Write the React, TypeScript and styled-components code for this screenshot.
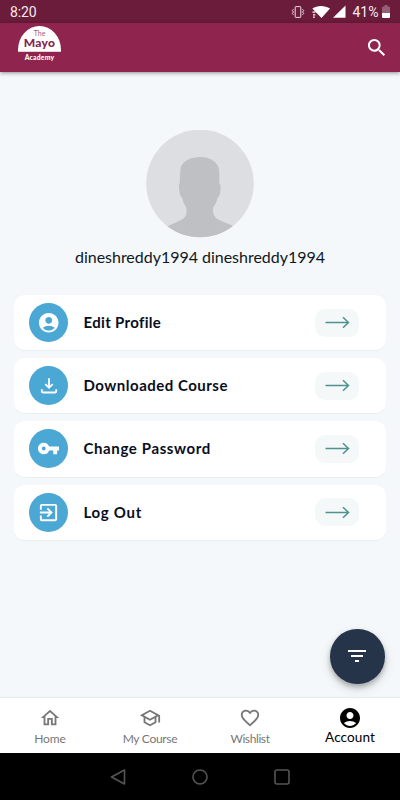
import React from "react";
import styled, { createGlobalStyle } from "styled-components";
import {
  MdAccountCircle,
  MdExitToApp,
  MdFavoriteBorder,
  MdFilterList,
  MdOutlineHome,
  MdOutlineSchool,
  MdSearch,
  MdVpnKey,
} from "react-icons/md";

const GlobalStyle = createGlobalStyle`
  * { box-sizing: border-box; }
  body { margin: 0; background: #f4f8fa; font-family: Lato, "Open Sans", sans-serif; }
  svg { display: block; flex: none; }
`;

const Screen = styled.div`
  width: 400px;
  height: 800px;
  display: flex;
  flex-direction: column;
  background: #f4f8fa;
  position: relative;
  overflow: hidden;
`;

const StatusBar = styled.div`
  height: 23px;
  flex: none;
  display: flex;
  align-items: center;
  padding: 1px 10px 0 10px;
  background: #6a1c3a;
  color: #f6e9ee;
  font: 400 14px/22px Roboto, sans-serif;
`;

const StatusTime = styled.span`
  margin-right: auto;
  letter-spacing: -0.15px;
`;

const Battery = styled.span`
  width: 33px;
  text-align: center;
  white-space: nowrap;
  font-size: 14px;
`;

const AppBar = styled.header`
  height: 48.5px;
  flex: none;
  display: flex;
  justify-content: space-between;
  padding: 3px 12px 0 18px;
  background: #8f254f;
  box-shadow: 0 1px 4px rgba(0, 0, 0, 0.42);
  color: #fff;
  z-index: 1;
`;

const Logo = styled.div`
  width: 43px;
  display: flex;
  flex-direction: column;
  align-items: center;
`;

const LogoDome = styled.div`
  width: 43px;
  height: 26px;
  border-radius: 21.5px 21.5px 0 0 / 24px 24px 0 0;
  border-bottom: 1px solid #e7cbd6;
  background: #fff;
  color: #842650;
  display: flex;
  flex-direction: column;
  align-items: center;
`;

const LogoThe = styled.span`
  font: 400 7px/8px Lato, sans-serif;
  margin-top: 3px;
  color: #a05a7b;
`;

const LogoName = styled.span`
  font: 900 12px/12px Lato, sans-serif;
  letter-spacing: 0.25px;
`;

const LogoCaption = styled.span`
  margin-top: 1px;
  font: 900 6.8px/8px Lato, sans-serif;
  letter-spacing: 0.2px;
`;

const SearchButton = styled.button`
  border: 0;
  padding: 0;
  background: none;
  color: #fff;
  height: 24px;
  margin-top: 9.5px;
`;

const Main = styled.main`
  flex: 1;
  display: flex;
  flex-direction: column;
  align-items: center;
  padding: 58px 14px 0;
`;

const UserName = styled.h1`
  margin: 7px 0 0;
  height: 23px;
  font-weight: 400;
  font-size: 16px;
  line-height: 23px;
  letter-spacing: -0.02px;
  color: #101722;
  white-space: nowrap;
`;

const Menu = styled.div`
  width: 372px;
  margin-top: 27.5px;
  display: flex;
  flex-direction: column;
  gap: 8px;
`;

const MenuCard = styled.div`
  height: 55.2px;
  display: flex;
  align-items: center;
  padding: 0 27px 0 15px;
  border-radius: 10px;
  background: #fff;
  box-shadow: 0 0.5px 1px rgba(60, 80, 90, 0.06);
`;

const IconDisc = styled.span`
  width: 39px;
  height: 39px;
  border-radius: 50%;
  display: flex;
  align-items: center;
  justify-content: center;
  background: #4ba7d4;
  color: #fff;
`;

const MenuLabel = styled.span<{ $track: number }>`
  flex: 1;
  margin-left: 15.5px;
  padding-bottom: 1px;
  font-weight: 700;
  font-size: 15px;
  line-height: 20px;
  letter-spacing: ${(p) => p.$track}px;
  color: #080e1c;
`;

const ArrowPill = styled.span`
  width: 44px;
  height: 28px;
  border-radius: 10px;
  display: flex;
  align-items: center;
  justify-content: center;
  background: #f4f8f9;
`;

const Fab = styled.button`
  position: absolute;
  right: 15.5px;
  bottom: 116.5px;
  width: 54.5px;
  height: 54.5px;
  border: 0;
  padding: 0;
  border-radius: 50%;
  background: #26344a;
  color: #fff;
  display: flex;
  align-items: center;
  justify-content: center;
  box-shadow: 0 3px 5px rgba(0, 0, 0, 0.25), 0 5px 12px rgba(0, 0, 0, 0.12);
`;

const BottomNav = styled.nav`
  height: 55px;
  flex: none;
  display: grid;
  grid-template-columns: repeat(4, 1fr);
  background: #fff;
  box-shadow: 0 -1px 1px rgba(0, 0, 0, 0.05);
`;

const NavItem = styled.div<{ $active?: boolean; $track: number }>`
  display: flex;
  flex-direction: column;
  align-items: center;
  padding-top: ${(p) => (p.$active ? 8 : 9)}px;
  color: ${(p) => (p.$active ? "#000" : "#777")};
  font-size: ${(p) => (p.$active ? 13.6 : 12)}px;
  line-height: 18px;
  letter-spacing: ${(p) => p.$track}px;
  white-space: nowrap;
`;

const NavLabel = styled.span<{ $active?: boolean }>`
  margin-top: ${(p) => (p.$active ? -2 : 0.5)}px;
`;

const SystemNav = styled.div`
  height: 47px;
  flex: none;
  display: flex;
  align-items: center;
  justify-content: center;
  gap: 62px;
  background: #000;
`;

const StatusIcons = () => (
  <svg width="58" height="16" viewBox="0 0 58 16" fill="#fff">
    <g fill="none" stroke="#efdce4" strokeWidth="1">
      <rect x="4.2" y="2.6" width="5.6" height="10.8" rx="0.6" />
      <path d="M2.500 5.200L1.300 6.600l1.200 1.400-1.200 1.400 1.200 1.400M11.500 5.200l1.200 1.400L11.500 8l1.200 1.400-1.200 1.400" />
    </g>
    <path d="M21.300 4.600C26 1 34 1 39 4.600L30.500 14z" />
    <path d="M21.500 8.200h3M22 10.800h2.300M22 13.200h1.800" stroke="#fff" strokeWidth="1.2" />
    <path d="M54.500 1.500v12.300H42z" />
  </svg>
);

const BatteryIcon = () => (
  <svg width="8" height="14" viewBox="0 0 8 14">
    <path d="M0 2.500Q0 1.500 1 1.500h1.500V0h3v1.500H7Q8 1.500 8 2.500V8H0z" fill="#a0718a" opacity=".8" />
    <path d="M0 8h8v4q0 1-1 1H1q-1 0-1-1z" fill="#fff" />
  </svg>
);

const Avatar = () => (
  <svg width="108" height="108" viewBox="0 0 108 108">
    <defs>
      <clipPath id="avatar-disc">
        <circle cx="54" cy="53.5" r="53.8" />
      </clipPath>
    </defs>
    <g clipPath="url(#avatar-disc)">
      <path fill="#dddee1" d="M0 0h108v108H0z" />
      <path
        fill="#bfc0c4"
        d="M54 27C45 27 37.500 31 35 36.500Q33.800 42 33.700 53.500C32.500 54 33 57 33.300 60.500Q33.800 66 36 67.500Q37 73 40.500 78V83Q40.500 87 35 90L19 97.500V108H91V97.500L73 90Q67.500 87 67 82V78Q70.500 73 71.800 67.500C74 66 74.500 61 74.600 58Q74.800 54 73.300 53.500C73.500 43 73.500 39 71.500 35.500Q67 27 54 27z"
      />
    </g>
  </svg>
);

const DownloadIcon = () => (
  <svg width="20" height="20" viewBox="0 0 20 20" fill="none" stroke="#fff" strokeWidth="1.800">
    <path d="M10 2.200v9.300M6.300 8.200L10 11.800l3.700-3.600M2.800 13.300v1.900q0 1.300 1.300 1.300h11.800q1.300 0 1.300-1.300v-1.900" />
  </svg>
);

const ArrowIcon = () => (
  <svg width="25" height="13" viewBox="0 0 25 13" fill="none" stroke="#4f918d" strokeWidth="1.500">
    <path d="M.5 6.500h23M18 1.200l5.500 5.300-5.500 5.300" />
  </svg>
);

const rows = [
  { label: "Edit Profile", icon: <MdAccountCircle size={23.5} />, track: 0.32 },
  { label: "Downloaded Course", icon: <DownloadIcon />, track: 0.5 },
  { label: "Change Password", icon: <MdVpnKey size={23} />, track: 0.62 },
  { label: "Log Out", icon: <MdExitToApp size={23} />, track: 0.7 },
];

const tabs = [
  { label: "Home", icon: <MdOutlineHome size={22} />, track: -0.1 },
  { label: "My Course", icon: <MdOutlineSchool size={22} />, track: -0.28 },
  { label: "Wishlist", icon: <MdFavoriteBorder size={22} />, track: -0.4 },
  { label: "Account", icon: <MdAccountCircle size={24} />, track: 0.05, active: true },
];

export default function App() {
  return (
    <>
      <GlobalStyle />
      <Screen>
        <StatusBar>
          <StatusTime>8:20</StatusTime>
          <StatusIcons />
          <Battery>41%</Battery>
          <BatteryIcon />
        </StatusBar>
        <AppBar>
          <Logo>
            <LogoDome>
              <LogoThe>The</LogoThe>
              <LogoName>Mayo</LogoName>
            </LogoDome>
            <LogoCaption>Academy</LogoCaption>
          </Logo>
          <SearchButton aria-label="Search">
            <MdSearch size={23.5} />
          </SearchButton>
        </AppBar>
        <Main>
          <Avatar />
          <UserName>dineshreddy1994 dineshreddy1994</UserName>
          <Menu>
            {rows.map((row) => (
              <MenuCard key={row.label}>
                <IconDisc>{row.icon}</IconDisc>
                <MenuLabel $track={row.track}>{row.label}</MenuLabel>
                <ArrowPill>
                  <ArrowIcon />
                </ArrowPill>
              </MenuCard>
            ))}
          </Menu>
        </Main>
        <BottomNav>
          {tabs.map((tab) => (
            <NavItem key={tab.label} $active={tab.active} $track={tab.track}>
              {tab.icon}
              <NavLabel $active={tab.active}>{tab.label}</NavLabel>
            </NavItem>
          ))}
        </BottomNav>
        <SystemNav>
          <svg width="20" height="20" viewBox="0 0 20 20" fill="none" stroke="#555" strokeWidth="1.600">
            <path d="M16.500 3v14L3.500 10z" strokeLinejoin="round" />
          </svg>
          <svg width="20" height="20" viewBox="0 0 20 20" fill="none" stroke="#555" strokeWidth="1.600">
            <circle cx="10" cy="10" r="7" />
          </svg>
          <svg width="20" height="20" viewBox="0 0 20 20" fill="none" stroke="#555" strokeWidth="1.600">
            <rect x="3" y="3" width="14" height="14" rx="2" />
          </svg>
        </SystemNav>
        <Fab aria-label="Filter">
          <MdFilterList size={24} />
        </Fab>
      </Screen>
    </>
  );
}
